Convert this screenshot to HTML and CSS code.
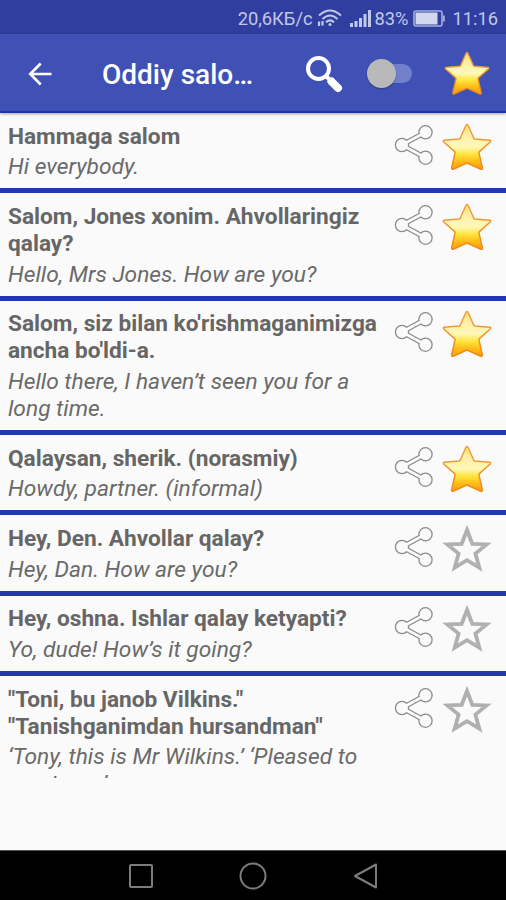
FILE: index.html
```
<!DOCTYPE html>
<html lang="uz">
<head>
    <meta charset="UTF-8">
    <meta name="viewport" content="width=device-width, initial-scale=1.0">
    <title>Oddiy salomlashish</title>
    <link rel="stylesheet" href="styles.css">
</head>
<body>

    <!-- Shared icons -->
    <svg class="sprite" width="0" height="0">
        <defs>
            <linearGradient id="gold" x1="0" y1="0" x2="0" y2="1">
                <stop offset="0" stop-color="#ffdf70"/>
                <stop offset="0.25" stop-color="#fff0a8"/>
                <stop offset="0.5" stop-color="#fff8b8"/>
                <stop offset="0.66" stop-color="#ffe640"/>
                <stop offset="0.82" stop-color="#ffbd18"/>
                <stop offset="1" stop-color="#ff9c0c"/>
            </linearGradient>
            <linearGradient id="goldEdge" x1="0" y1="0" x2="0" y2="1">
                <stop offset="0" stop-color="#f0a040"/>
                <stop offset="1" stop-color="#ee8a18"/>
            </linearGradient>
        </defs>
        <symbol id="star" viewBox="0 0 50 48">
            <path d="M24 2.300Q25 0.600 26 2.300L31.800 15.200Q32.200 16 33 16.100L47.800 17.300Q49.400 17.800 48.200 19L37.400 28.600Q36.800 29.200 37 30L40.400 45Q40.400 46.800 38.800 46.200L25.700 40.200Q25 39.900 24.300 40.200L11.200 46.200Q9.600 46.800 9.600 45L13 30Q13.200 29.200 12.600 28.600L1.800 19Q0.600 17.800 2.200 17.300L17 16.100Q17.800 16 18.200 15.200Z" fill="url(#gold)" stroke="url(#goldEdge)" stroke-width="1.500" stroke-linejoin="round"/>
        </symbol>
        <symbol id="star-empty" viewBox="0 0 50 48">
            <path d="M25 5L30.300 18.800L44.600 19.400L33.400 28.600L37.300 42.700L25 35.200L12.700 42.700L16.600 28.600L5.400 19.400L19.700 18.800Z" fill="none" stroke="#b0b0b0" stroke-width="3.800"/>
        </symbol>
        <symbol id="share" viewBox="0 0 40 42">
            <path d="M8 21L31 8.500M8 21L31 33.500" stroke="#8c8c8c" stroke-width="5.200"/>
            <g fill="#fafafa" stroke="#8c8c8c" stroke-width="1.300">
                <circle cx="8" cy="21" r="6.600"/>
                <circle cx="31.500" cy="8.300" r="6.600"/>
                <circle cx="31.500" cy="33.700" r="6.600"/>
            </g>
            <path d="M8 21L31 8.500M8 21L31 33.500" stroke="#fafafa" stroke-width="2.600"/>
        </symbol>
    </svg>

    <div class="status-bar">
        <span class="speed">20,6КБ/с</span>
        <svg class="wifi" width="26" height="18" viewBox="0 0 26 18" fill="none" stroke="#c1c7e9" stroke-width="2">
            <path d="M2 6.500Q13 -3.500 24 6.500M5.500 10Q13 3 20.500 10M9 13.200Q13 9.500 17 13.200"/>
            <circle cx="13" cy="15.500" r="1.500" fill="#c1c7e9" stroke="none"/>
            <path d="M2 12.500V17M5.500 12V16.500" stroke-width="2.200"/>
        </svg>
        <svg class="signal" width="22" height="18" viewBox="0 0 22 18" fill="#c1c7e9">
            <path d="M0 14h3v4H0zM4.500 12h3v6h-3zM9 9h3v9H9zM13.500 5h3v13h-3zM18 1h3v17h-3z"/>
        </svg>
        <span class="percent">83%</span>
        <svg class="battery" width="32" height="17" viewBox="0 0 32 17">
            <rect x="1" y="1" width="28" height="15" rx="2" fill="none" stroke="#a5aedb" stroke-width="1.600"/>
            <rect x="2.500" y="2.500" width="22" height="12" fill="#d4d8ee"/>
            <path d="M30.800 5.500V11.500" stroke="#a5aedb" stroke-width="2"/>
        </svg>
        <span class="clock">11:16</span>
    </div>

    <header class="toolbar">
        <svg class="back" width="24" height="24" viewBox="0 0 24 24" fill="none" stroke="#fff" stroke-width="2.600">
            <path d="M23.500 12H2.500M12.700 1.500L2.200 12L12.700 22.500"/>
        </svg>
        <h1>Oddiy salo…</h1>
        <svg class="search" width="38" height="38" viewBox="0 0 38 38" fill="none" stroke="#fff">
            <circle cx="13.500" cy="13.500" r="10.500" stroke-width="4"/>
            <path d="M21 21L26 26" stroke-width="4"/>
            <path d="M26.500 26.500L33 33" stroke-width="8" stroke-linecap="round"/>
        </svg>
        <div class="switch"><span class="thumb"></span></div>
        <svg class="fav" width="46" height="45"><use href="#star"/></svg>
    </header>

    <main class="list">
        <div class="row">
            <div class="phrase">
                <p class="uz">Hammaga salom</p>
                <p class="en">Hi everybody.</p>
            </div>
            <svg class="share"><use href="#share"/></svg>
            <svg class="star"><use href="#star"/></svg>
        </div>
        <div class="row">
            <div class="phrase">
                <p class="uz">Salom, Jones xonim. Ahvollaringiz<br>qalay?</p>
                <p class="en">Hello, Mrs Jones. How are you?</p>
            </div>
            <svg class="share"><use href="#share"/></svg>
            <svg class="star"><use href="#star"/></svg>
        </div>
        <div class="row">
            <div class="phrase">
                <p class="uz">Salom, siz bilan ko'rishmaganimizga<br>ancha bo'ldi-a.</p>
                <p class="en">Hello there, I haven’t seen you for a<br>long time.</p>
            </div>
            <svg class="share"><use href="#share"/></svg>
            <svg class="star"><use href="#star"/></svg>
        </div>
        <div class="row">
            <div class="phrase">
                <p class="uz">Qalaysan, sherik. (norasmiy)</p>
                <p class="en">Howdy, partner. (informal)</p>
            </div>
            <svg class="share"><use href="#share"/></svg>
            <svg class="star"><use href="#star"/></svg>
        </div>
        <div class="row">
            <div class="phrase">
                <p class="uz">Hey, Den. Ahvollar qalay?</p>
                <p class="en">Hey, Dan. How are you?</p>
            </div>
            <svg class="share"><use href="#share"/></svg>
            <svg class="star"><use href="#star-empty"/></svg>
        </div>
        <div class="row">
            <div class="phrase">
                <p class="uz">Hey, oshna. Ishlar qalay ketyapti?</p>
                <p class="en">Yo, dude! How’s it going?</p>
            </div>
            <svg class="share"><use href="#share"/></svg>
            <svg class="star"><use href="#star-empty"/></svg>
        </div>
        <div class="row">
            <div class="phrase">
                <p class="uz">"Toni, bu janob Vilkins."<br>"Tanishganimdan hursandman"</p>
                <p class="en">‘Tony, this is Mr Wilkins.’ ‘Pleased to<br>meet you.’</p>
            </div>
            <svg class="share"><use href="#share"/></svg>
            <svg class="star"><use href="#star-empty"/></svg>
        </div>
    </main>

    <footer class="nav-bar">
        <svg width="28" height="28" viewBox="0 0 28 28"><rect x="3" y="3" width="22" height="22" rx="1"/></svg>
        <svg width="28" height="28" viewBox="0 0 28 28"><circle cx="14" cy="14" r="12.500"/></svg>
        <svg width="28" height="28" viewBox="0 0 28 28"><path d="M24 2.500V25.500L3 14Z"/></svg>
    </footer>

</body>
</html>
```
FILE: styles.css
```
body {
    font-family: Roboto, sans-serif;
    background-color: #fafafa;
    margin: 0;
    height: 900px;
    display: flex;
    flex-direction: column;
    overflow: hidden;
}
.sprite {
    position: absolute;
}
.status-bar {
    flex: none;
    height: 34px;
    box-sizing: border-box;
    padding: 2px 8px 0 0;
    background-color: #303f9f;
    color: #c1c7e9;
    font-size: 18.3px;
    display: flex;
    align-items: center;
    justify-content: flex-end;
}
.wifi {
    margin-left: 4px;
}
.signal {
    margin: 0 3px 0 7px;
}
.battery {
    margin: 0 7px 0 5px;
}
.toolbar {
    flex: none;
    height: 79px;
    box-sizing: border-box;
    background-color: #3f51b5;
    border-bottom: 2px solid #1c35a3;
    box-shadow: 0 1px 3px rgba(0, 0, 0, 0.35);
    display: flex;
    align-items: center;
    padding: 2px 16px 0 28px;
    z-index: 1;
}
.toolbar h1 {
    margin: 0 0 0 50px;
    padding-top: 2px;
    width: 203px;
    color: white;
    font-size: 28px;
    font-weight: 500;
    white-space: nowrap;
}
.switch {
    width: 45px;
    height: 30px;
    margin-left: 24px;
    display: flex;
    align-items: center;
}
.switch::after {
    content: "";
    width: 29px;
    height: 19px;
    margin-left: -13px;
    border-radius: 10px;
    background-color: #7280cc;
}
.thumb {
    flex: none;
    width: 29px;
    height: 29px;
    border-radius: 50%;
    background-color: #b9b9b9;
    box-shadow: 0 1px 2px rgba(0, 0, 0, 0.3);
    z-index: 1;
}
.fav {
    margin-left: auto;
}
.list {
    height: 665px;
    overflow: hidden;
}
.row {
    display: flex;
    align-items: flex-start;
    padding: 10.6px 14px 7.4px 8px;
    border-bottom: 5px solid #2039ad;
}
.row:last-child {
    border-bottom: none;
}
.phrase {
    flex: 1;
    color: #666;
    line-height: 26.85px;
    white-space: nowrap;
}
.phrase p {
    margin: 0;
}
.phrase .uz {
    font-size: 22.65px;
    font-weight: 700;
    margin-bottom: 3.8px;
}
.phrase .en {
    font-size: 22.75px;
    font-style: italic;
    color: #6a6a6a;
}
.share {
    width: 40px;
    height: 42px;
    margin: 0 8px 0 0;
}
.star {
    width: 50px;
    height: 48px;
    margin-top: -1px;
}
.nav-bar {
    flex: none;
    height: 50px;
    box-sizing: border-box;
    margin-top: auto;
    border-top: 1px solid #555;
    background-color: #000;
    display: flex;
    justify-content: center;
    align-items: center;
    gap: 84.5px;
}
.nav-bar svg {
    fill: none;
    stroke: #7c7c7c;
    stroke-width: 2;
    stroke-linejoin: round;
}
```
